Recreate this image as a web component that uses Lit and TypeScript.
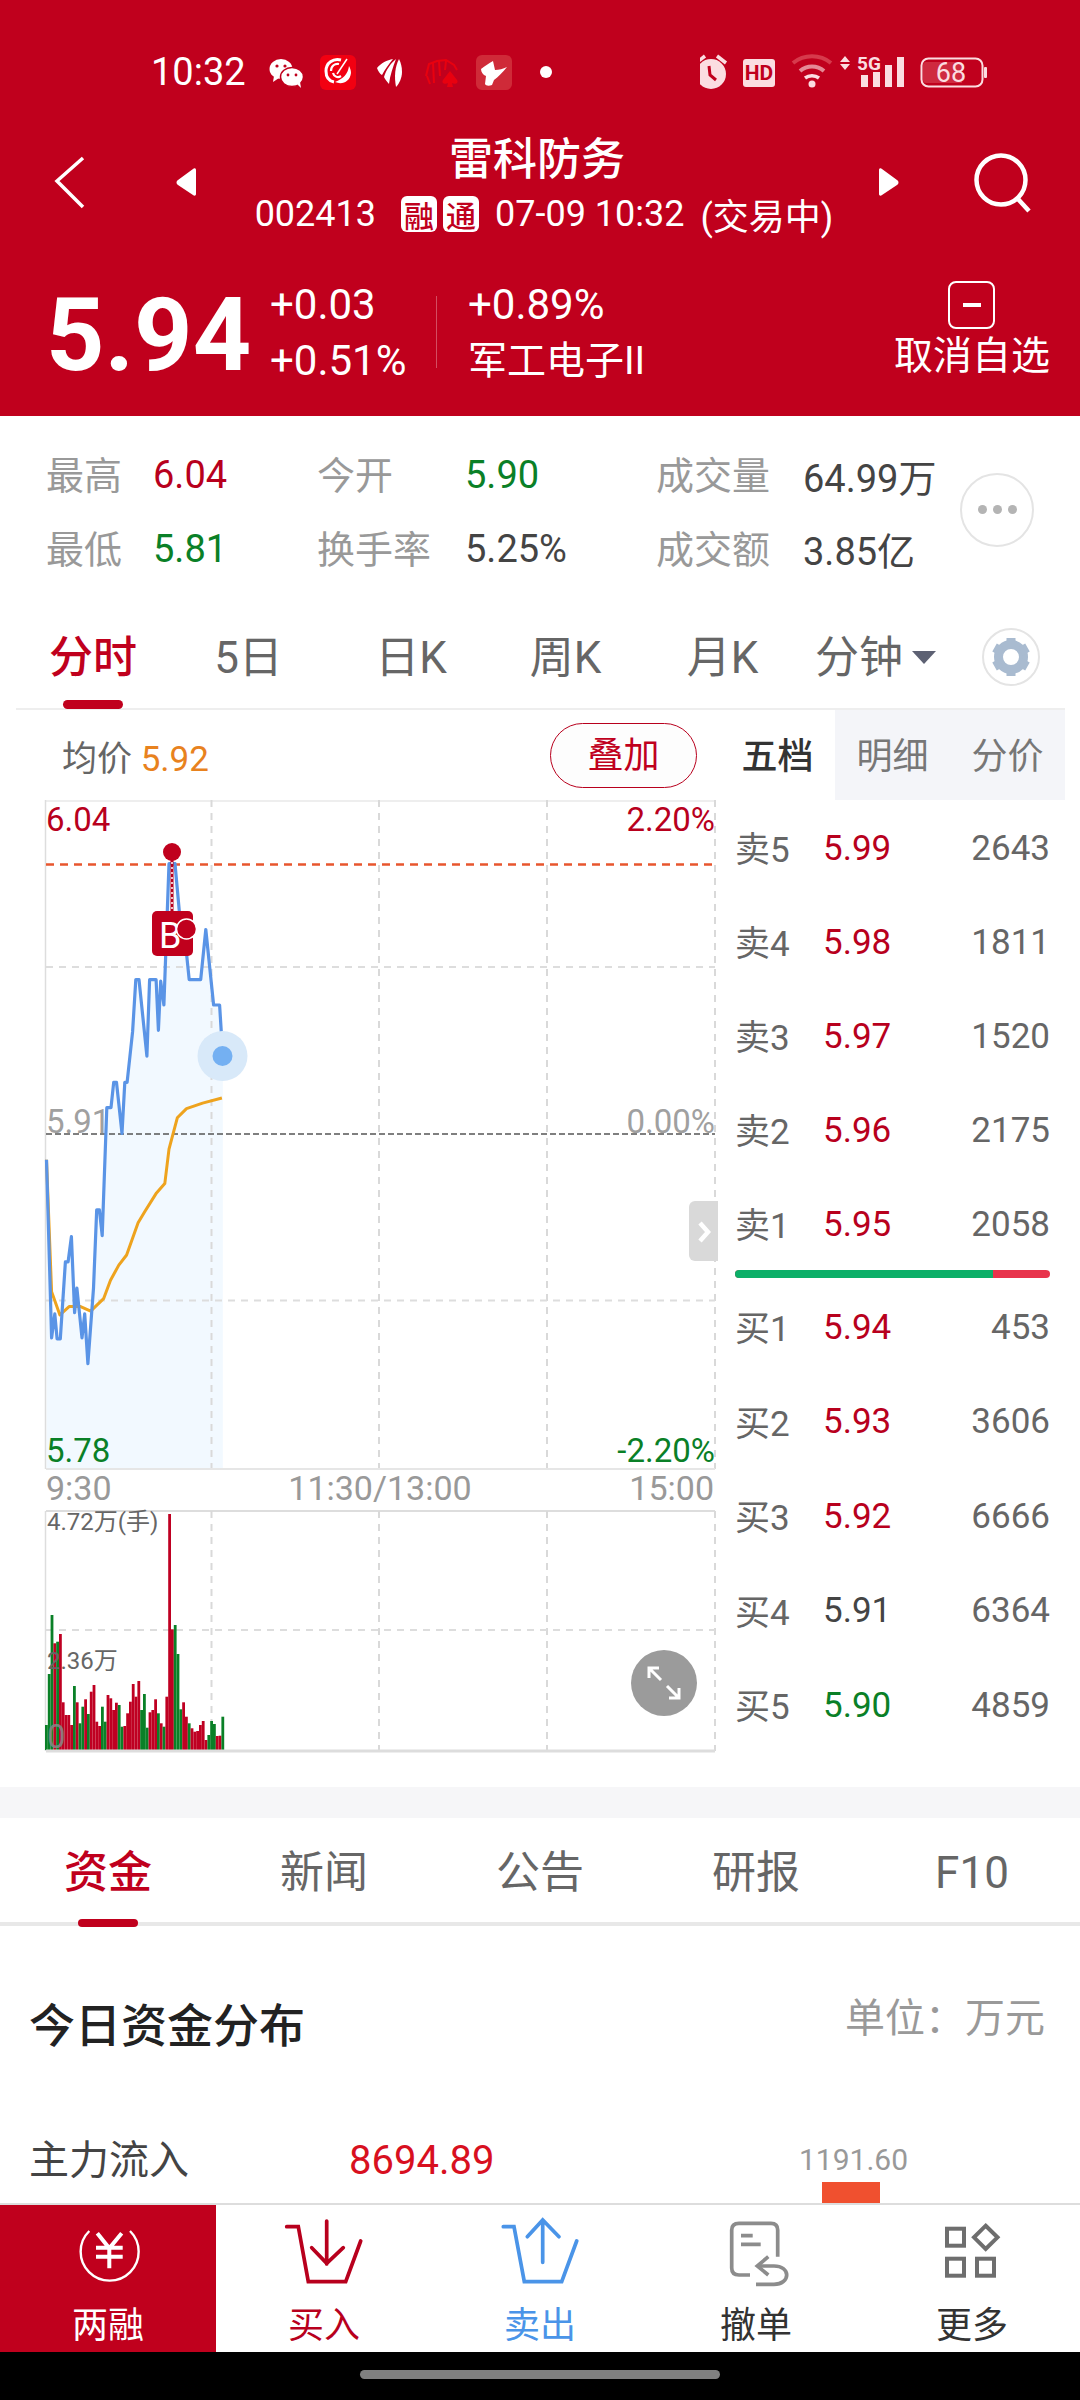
import { LitElement, css, html, svg } from "lit";
import { customElement } from "lit/decorators.js";

const RED = "#c0001d";
const GREEN = "#0a8027";

// price line traced from the reference, in zoomed crop coordinates
const PRICE: number[][] = [
  [101, 803], [112, 1190], [119, 1138], [124, 1192], [131, 1192], [142, 1025], [148, 1025], [155, 970],
  [162, 1135], [167, 1082], [178, 1190], [184, 1138], [191, 1246], [203, 1082], [210, 912], [216, 912],
  [222, 968], [232, 690], [241, 690], [247, 635], [253, 635], [265, 746], [271, 635], [276, 635],
  [288, 525], [295, 412], [302, 412], [319, 578], [325, 412], [339, 412], [344, 522], [349, 415],
  [356, 467], [367, 160], [380, 160], [390, 270], [405, 355], [411, 412], [436, 412], [447, 303],
  [464, 467], [477, 467], [484, 578],
];
const AVG: number[][] = [
  [101, 803], [112, 1090], [130, 1140], [150, 1122], [175, 1122], [197, 1132], [225, 1105], [240, 1065],
  [258, 1032], [275, 1010], [300, 940], [315, 915], [340, 875], [358, 855], [367, 780], [385, 712],
  [405, 692], [440, 680], [482, 669],
];
const toPoints = (pts: number[][]) =>
  pts.map(([x, y]) => `${(x / 2.172).toFixed(1)},${(y / 2.172 - 10).toFixed(1)}`).join(" ");

// volume bars: [colour, top in a 3x crop whose baseline is 450]
const BARS: [string, number][] = [
  ["g", 375], ["g", 222], ["g", 45], ["r", 130], ["g", 125], ["r", 102], ["r", 307], ["r", 345], ["r", 345],
  ["r", 375], ["g", 258], ["r", 307], ["g", 370], ["g", 320], ["r", 298], ["g", 342], ["r", 275], ["r", 255],
  ["r", 365], ["r", 378], ["g", 320], ["g", 365], ["r", 285], ["r", 295], ["r", 330], ["r", 308], ["g", 315],
  ["g", 380], ["r", 378], ["r", 340], ["r", 305], ["r", 252], ["r", 290], ["r", 243], ["g", 330], ["g", 282],
  ["g", 383], ["r", 337], ["r", 330], ["r", 298], ["g", 340], ["r", 370], ["g", 380], ["r", 290], ["r", -258],
  ["r", 88], ["g", 75], ["g", 162], ["g", 328], ["r", 307], ["r", 350], ["g", 370], ["r", 385], ["r", 395],
  ["r", 393], ["r", 375], ["r", 363], ["r", 420], ["g", 405], ["g", 363], ["g", 372], ["r", 408], ["r", 407],
  ["g", 350],
];

const SELLS = [
  ["卖5", "5.99", "2643", "up"],
  ["卖4", "5.98", "1811", "up"],
  ["卖3", "5.97", "1520", "up"],
  ["卖2", "5.96", "2175", "up"],
  ["卖1", "5.95", "2058", "up"],
];
const BUYS = [
  ["买1", "5.94", "453", "up"],
  ["买2", "5.93", "3606", "up"],
  ["买3", "5.92", "6666", "up"],
  ["买4", "5.91", "6364", "flat"],
  ["买5", "5.90", "4859", "down"],
];

@customElement("app-root")
export class AppRoot extends LitElement {
  static styles = css`
    :host {
      display: flex;
      flex-direction: column;
      width: 1080px;
      height: 2400px;
      overflow: hidden;
      background: #fff;
      font-family: Roboto, "Noto Sans CJK SC", sans-serif;
      color: #333;
    }

    svg {
      display: block;
      flex: none;
    }

    .head {
      height: 416px;
      flex: none;
      background: #c0001d;
      color: #fff;
    }

    .status {
      display: flex;
      align-items: center;
      height: 44px;
      padding: 50px 0 0 151px;
    }

    .clock {
      width: 109px;
      font-size: 38px;
      line-height: 44px;
    }

    .status-right {
      margin-left: 142px;
    }

    .nav {
      display: flex;
      height: 108px;
      margin-top: 36px;
    }

    .title {
      flex: 1;
      text-align: center;
    }

    .title h1 {
      margin: 0 6px 0 0;
      font-size: 44px;
      line-height: 60px;
      font-weight: 500;
    }

    .sub {
      display: flex;
      justify-content: center;
      align-items: center;
      margin-left: 8px;
      height: 48px;
      font-size: 36px;
      white-space: nowrap;
    }

    .tag {
      display: flex;
      align-items: center;
      justify-content: center;
      width: 36px;
      height: 36px;
      margin-left: 6px;
      border-radius: 6px;
      background: #fff;
      color: #c0001d;
      font-size: 30px;
      font-weight: 500;
    }

    .code {
      margin-right: 19px;
    }

    .time {
      margin-left: 16px;
    }

    .state {
      margin-left: 16px;
    }

    .quote {
      display: flex;
      align-items: flex-start;
      padding: 39px 30px 0 46px;
    }

    .price {
      width: 224px;
      margin-top: 2px;
      font-size: 102px;
      line-height: 112px;
      font-weight: 700;
    }

    .changes {
      width: 166px;
      font-size: 42px;
      line-height: 56px;
    }

    .divider {
      width: 1px;
      height: 72px;
      margin: 19px 31px 0 0;
      background: rgba(255, 255, 255, 0.3);
    }

    .sector {
      font-size: 42px;
      line-height: 56px;
    }

    .sector .cn {
      font-size: 39px;
    }

    .watch {
      display: flex;
      flex-direction: column;
      align-items: center;
      margin: 4px 0 0 auto;
      font-size: 39px;
      line-height: 54px;
    }

    .watch i {
      display: flex;
      align-items: center;
      justify-content: center;
      box-sizing: border-box;
      width: 47px;
      height: 48px;
      border: 2px solid #fff;
      border-radius: 8px;
    }

    .watch i::before {
      content: "";
      width: 18px;
      height: 4px;
      background: #fff;
    }

    .stats {
      display: flex;
      align-items: center;
      height: 198px;
      flex: none;
      box-sizing: border-box;
      padding: 0 0 6px 46px;
    }

    .stats-grid {
      display: grid;
      grid-template-columns: 107px 164px 148px 191px 147px 157px;
      grid-auto-rows: 73.500px;
      align-items: center;
      font-size: 38px;
      white-space: nowrap;
    }

    .lbl {
      margin-top: -5px;
      color: #999;
      font-size: 38px;
    }

    .up {
      color: #b8001d;
    }

    .down {
      color: #0a8027;
    }

    .flat {
      color: #444;
    }

    .more {
      display: flex;
      align-items: center;
      justify-content: center;
      gap: 6px;
      box-sizing: border-box;
      width: 74px;
      height: 74px;
      margin-top: -5px;
      border: 2px solid #e4e4e4;
      border-radius: 50%;
    }

    .more b {
      width: 9px;
      height: 9px;
      border-radius: 50%;
      background: #b4b4b4;
    }

    .tabs {
      display: flex;
      height: 96px;
      flex: none;
      box-sizing: border-box;
      margin: 0 15px 0 16px;
      border-bottom: 2px solid #eee;
      font-size: 44px;
      line-height: 88px;
      color: #666;
    }

    .tabs > div {
      position: relative;
      text-align: center;
    }

    .tabs .active {
      color: #c0001d;
      font-weight: 500;
    }

    .tabs .active::after {
      content: "";
      position: absolute;
      left: 47px;
      bottom: -1px;
      width: 60px;
      height: 9px;
      border-radius: 5px;
      background: #c0001d;
    }

    .caret {
      display: inline-block;
      margin-left: 9px;
      vertical-align: 9px;
      border-left: 12px solid transparent;
      border-right: 12px solid transparent;
      border-top: 13px solid #5d6173;
    }

    .gear {
      margin: 13px 0 0 40px;
    }

    .toolbar {
      display: flex;
      align-items: center;
      height: 90px;
      flex: none;
    }

    .avg {
      width: 488px;
      margin-left: 62px;
      font-size: 35px;
      color: #666;
    }

    .avg span {
      color: #e8821e;
    }

    .overlay {
      box-sizing: border-box;
      width: 147px;
      height: 65px;
      border: 1.5px solid #b8001d;
      border-radius: 33px;
      background: #fdfdfd;
      color: #c0001d;
      font-size: 36px;
      line-height: 64px;
      text-align: center;
    }

    .seg {
      width: 115px;
      height: 90px;
      text-align: center;
      font-size: 36px;
      line-height: 94px;
      color: #777;
    }

    .seg.first {
      margin-left: 23px;
      color: #333;
      font-weight: 500;
    }

    .seg.off {
      background: #f4f5f9;
    }

    .market {
      display: flex;
      height: 987px;
      flex: none;
    }

    .book {
      width: 315px;
      padding: 1px 0 0 5px;
      flex: none;
    }

    .row {
      display: grid;
      grid-template-columns: 88px auto 1fr;
      align-items: center;
      height: 94px;
      font-size: 35px;
      color: #666;
    }

    .row .side {
      margin-top: -3px;
    }

    .row .vol {
      text-align: right;
    }

    .row.bid {
      height: 94.500px;
    }

    .ratio {
      display: flex;
      height: 8px;
      margin: -1px 0 2px;
      border-radius: 4px;
      overflow: hidden;
      background: #e8344c;
    }

    .ratio i {
      width: 258px;
      background: #0caf68;
    }

    .gap {
      height: 31px;
      flex: none;
      background: #f6f6f8;
    }

    .news {
      display: grid;
      grid-template-columns: repeat(5, 216px);
      height: 108px;
      flex: none;
      box-sizing: border-box;
      border-bottom: 4px solid #e8e8e8;
      font-size: 44px;
      line-height: 110px;
      text-align: center;
      color: #666;
    }

    .news div {
      position: relative;
    }

    .news .active {
      color: #c0001d;
      font-weight: 500;
    }

    .news .active::after {
      content: "";
      position: absolute;
      left: 78px;
      bottom: 1px;
      width: 60px;
      height: 8px;
      border-radius: 4px;
      background: #c0001d;
    }

    .funds {
      flex: 1;
      min-height: 0;
      overflow: hidden;
      padding: 64px 35px 0 29px;
    }

    .funds-head {
      display: flex;
      justify-content: space-between;
      align-items: flex-start;
    }

    .funds-head h2 {
      margin: 0;
      font-size: 46px;
      line-height: 72px;
      font-weight: 500;
      color: #222;
    }

    .funds-head span {
      font-size: 40px;
      line-height: 58px;
      color: #999;
    }

    .flow {
      display: flex;
      margin-top: 69px;
      font-size: 40px;
      line-height: 60px;
    }

    .flow .name {
      width: 320px;
      color: #444;
    }

    .flow .val {
      width: 450px;
      color: #d8101f;
    }

    .flow .col {
      width: 104px;
      font-size: 30px;
      line-height: 44px;
      padding-top: 7px;
      color: #999;
      text-align: center;
    }

    .flow .col i {
      display: block;
      width: 58px;
      height: 40px;
      margin: 0 auto;
      background: #f0502f;
    }

    .bottom {
      display: grid;
      grid-template-columns: repeat(5, 216px);
      height: 149px;
      flex: none;
      box-sizing: border-box;
      border-top: 2px solid #ddd;
      background: #fff;
    }

    .bottom > div {
      display: flex;
      flex-direction: column;
      align-items: center;
      font-size: 36px;
      line-height: 50px;
      color: #333;
    }

    .bottom svg {
      margin-top: 5px;
    }

    .bottom span {
      margin-top: 1px;
    }

    .bottom .credit {
      background: #c0001d;
      color: #fff;
    }

    .bottom .buy {
      color: #b8001d;
    }

    .bottom .sell {
      color: #4a94e8;
    }

    .gesture {
      display: flex;
      justify-content: center;
      padding-top: 18px;
      height: 48px;
      flex: none;
      box-sizing: border-box;
      background: #000;
    }

    .gesture i {
      width: 360px;
      height: 9px;
      border-radius: 5px;
      background: #808080;
    }
  `;

  private statusLeft() {
    return html`<svg width="298" height="44" viewBox="260 50 298 44">
      <ellipse cx="281" cy="69" rx="11.500" ry="10" fill="#fff" />
      <path d="M274 76l-1 6 6-4z" fill="#fff" />
      <ellipse cx="292" cy="77" rx="11.500" ry="9.500" fill="#fff" stroke="${RED}" stroke-width="1.5" />
      <path d="M297 84l4 4-1-6z" fill="#fff" />
      <circle cx="277" cy="66" r="1.6" fill="${RED}" /><circle cx="285" cy="66" r="1.6" fill="${RED}" />
      <circle cx="288" cy="75" r="1.4" fill="${RED}" /><circle cx="296" cy="75" r="1.4" fill="${RED}" />

      <rect x="320" y="55" width="36" height="35" rx="6" fill="#f20011" />
      <path d="M341 60c-8-2-15 3-15 11 0 6 3 10 8 11" fill="none" stroke="#fff" stroke-width="3" />
      <path d="M331 71c0-5 4-8 8-7M333 73c1 4 5 5 8 3" fill="none" stroke="#fff" stroke-width="2.2" />
      <path d="M335 82c7 3 15 0 16-9 0-3-1-5-2-7-1 8-6 13-14 16z" fill="#fff" />
      <path d="M347 59l-10 15" stroke="#fff" stroke-width="1.5" />

      <path d="M393 59c-6 1-12 4-16 9 1 3 3 6 5 7 3-6 7-11 11-16z" fill="#fff" />
      <path d="M396 59c-5 4-10 11-12 18 1 2 3 5 5 7 1-9 4-17 7-25z" fill="#fff" />
      <path d="M399 59c-4 8-5 17-3 28 3-3 6-9 6-15 0-5-1-9-3-13z" fill="#fff" />

      <g fill="none" stroke="#e8000f" stroke-width="2">
        <path d="M426 76l3-12 8-3 9-1 8 5 3 5" />
        <path d="M430 84l-3-8M434 83l-1-20M440 76l-1-15M445 70l1-9" />
      </g>
      <path d="M450 71l-7 9c-2 3 2 5 5 3l-1 4h6l-1-4c3 2 7 0 5-3z" fill="#e8000f" />

      <rect x="476" y="55" width="36" height="35" rx="6" fill="#cf2a38" />
      <path d="M481 69c4-3 8-6 12-8l2 9c4 0 8-1 12-3-4 5-9 10-13 13l-2 5c-3 1-6 1-7-1l1-8c-3-1-5-4-5-7z" fill="#fff" />
      <circle cx="546" cy="72" r="6" fill="#fff" />
    </svg>`;
  }

  private statusRight() {
    const pale = "#fbdde1";
    return html`<svg width="290" height="44" viewBox="700 50 290 44">
      <circle cx="711" cy="74" r="15" fill="${pale}" />
      <path d="M696 63l9-7M726 63l-9-7" stroke="${pale}" stroke-width="3.5" />
      <path d="M709 66l1 9 6 5" fill="none" stroke="${RED}" stroke-width="3" />

      <rect x="743" y="59" width="32" height="28" rx="3" fill="${pale}" />
      <text x="759" y="80" text-anchor="middle" font-size="21" font-weight="700" fill="${RED}" font-family="Roboto">HD</text>

      <path d="M793 63c11-9 27-9 38 0" fill="none" stroke="#d63a4c" stroke-width="4" />
      <path d="M800 71c7-6 17-6 24 0" fill="none" stroke="#e58a96" stroke-width="4" />
      <path d="M805 78c4-3 10-3 14 0" fill="none" stroke="${pale}" stroke-width="3.5" />
      <circle cx="812" cy="84" r="3.5" fill="${pale}" />

      <path d="M845 56l5 6h-10zM845 70l5-6h-10z" fill="${pale}" />
      <text x="869" y="70" text-anchor="middle" font-size="19" font-weight="700" fill="${pale}" font-family="Roboto">5G</text>
      <rect x="861" y="75" width="7" height="12" fill="${pale}" />
      <rect x="873" y="72" width="7" height="15" fill="${pale}" />
      <rect x="885" y="65" width="7" height="22" fill="${pale}" />
      <rect x="897" y="57" width="7" height="30" fill="${pale}" />

      <rect x="921.5" y="58.5" width="61" height="28" rx="7" fill="none" stroke="${pale}" stroke-width="2" />
      <path d="M926 62h36v21h-36a3 3 0 0 1-3-3v-15a3 3 0 0 1 3-3z" fill="#cf2a3f" />
      <rect x="984" y="67" width="3" height="11" rx="1" fill="${pale}" />
      <text x="951" y="82" text-anchor="middle" font-size="27" fill="${pale}" font-family="Roboto">68</text>
    </svg>`;
  }

  private chart() {
    const verticals = [211.5, 379, 547, 715];
    const top = toPoints(PRICE);
    const lastX = (484 / 2.172).toFixed(1);
    const firstX = (101 / 2.172).toFixed(1);
    return html`<svg width="730" height="987" viewBox="0 800 730 987" font-family="Roboto, 'Noto Sans CJK SC', sans-serif">
      <g transform="translate(0 800)">
        <polygon points="${firstX},669 ${top} ${lastX},669" fill="#f2f9ff" />
      </g>

      <line x1="46" y1="801" x2="715" y2="801" stroke="#eee" stroke-width="2" />
      <line x1="45.500" y1="800" x2="45.500" y2="1469" stroke="#ddd" stroke-width="1.5" />
      ${verticals.map(
        (x) => svg`<line x1=${x} y1="800" x2=${x} y2="1469" stroke="#d9d9d9" stroke-width="2" stroke-dasharray="7 6" />`
      )}
      ${[967, 1300.5].map(
        (y) => svg`<line x1="46" y1=${y} x2="715" y2=${y} stroke="#ddd" stroke-width="2" stroke-dasharray="7 6" />`
      )}
      <line x1="46" y1="1469" x2="715" y2="1469" stroke="#e6e6e6" stroke-width="2" />
      <line x1="46" y1="864.5" x2="715" y2="864.5" stroke="#e8562e" stroke-width="2.5" stroke-dasharray="8 6" />
      <line x1="46" y1="1134" x2="715" y2="1134" stroke="#555" stroke-width="1.5" stroke-dasharray="6 3" />

      <g font-size="33">
        <text x="46" y="831" fill="#b8001d">6.04</text>
        <text x="715" y="831" fill="#b8001d" text-anchor="end">2.20%</text>
        <text x="46" y="1133" fill="#a0a0a0">5.91</text>
        <text x="715" y="1133" fill="#a0a0a0" text-anchor="end">0.00%</text>
        <text x="46" y="1462" fill="${GREEN}">5.78</text>
        <text x="715" y="1462" fill="${GREEN}" text-anchor="end">-2.20%</text>
      </g>
      <g font-size="34" fill="#999">
        <text x="46" y="1500">9:30</text>
        <text x="380" y="1500" text-anchor="middle">11:30/13:00</text>
        <text x="714" y="1500" text-anchor="end">15:00</text>
      </g>

      <g transform="translate(0 800)" fill="none" stroke-linejoin="round">
        <polyline points="${toPoints(AVG)}" stroke="#eea31e" stroke-width="3" />
        <polyline points="${top}" stroke="#5a94e6" stroke-width="3.2" />
      </g>

      <circle cx="222.500" cy="1056" r="25" fill="#d8e9f9" />
      <circle cx="222.500" cy="1056" r="10" fill="#74b0f2" />

      <line x1="172" y1="852" x2="172" y2="912" stroke="#b8001d" stroke-width="3" />
      <line x1="172" y1="852" x2="172" y2="912" stroke="#fff" stroke-width="1.5" stroke-dasharray="2 3" />
      <circle cx="172" cy="852" r="9" fill="#c0001d" />
      <rect x="152" y="911" width="41" height="45" rx="5" fill="#c0001d" />
      <text x="159" y="948" font-size="36" fill="#fff">B</text>
      <circle cx="186.5" cy="929" r="10" fill="#c0001d" stroke="#fff" stroke-width="1.5" />

      <path d="M718 1201h-23a6 6 0 0 0-6 6v48a6 6 0 0 0 6 6h23z" fill="#d9d9d9" />
      <path d="M700 1223l8 9-8 9" fill="none" stroke="#fff" stroke-width="4.5" />

      <!-- volume pane -->
      <line x1="46" y1="1511" x2="715" y2="1511" stroke="#ddd" stroke-width="2" />
      <line x1="45.500" y1="1511" x2="45.500" y2="1751" stroke="#ddd" stroke-width="1.5" />
      ${verticals.map(
        (x) => svg`<line x1=${x} y1="1511" x2=${x} y2="1751" stroke="#d9d9d9" stroke-width="2" stroke-dasharray="7 6" />`
      )}
      <line x1="46" y1="1630" x2="715" y2="1630" stroke="#ddd" stroke-width="2" stroke-dasharray="7 6" />
      ${BARS.map(
        ([c, t], i) =>
          svg`<rect x=${(45 + i * 2.8).toFixed(2)} y=${(1600 + t / 3).toFixed(1)} width="2.8" height=${((450 - t) / 3).toFixed(1)} fill=${c === "g" ? GREEN : "#bf0022"} />`
      )}
      <line x1="46" y1="1751" x2="715" y2="1751" stroke="#ddd" stroke-width="3" />
      <g font-size="24" fill="#666">
        <text x="47" y="1530">4.72万(手)</text>
        <text x="47" y="1669">2.36万</text>
      </g>
      <text x="47" y="1748" font-size="33" fill="#888" opacity="0.85">0</text>

      <circle cx="664" cy="1683" r="33" fill="#9b9b9b" />
      <path
        d="M649 1668l12 12M649 1678v-10h10M667 1686l12 12M679 1688v10h-10"
        fill="none"
        stroke="#fff"
        stroke-width="3"
      />
    </svg>`;
  }

  private gear() {
    const teeth = [0, 60, 120, 180, 240, 300];
    return html`<svg class="gear" width="58" height="60" viewBox="0 0 58 60">
      <circle cx="29" cy="30" r="28" fill="#fff" stroke="#e4e4e4" stroke-width="2" />
      <circle cx="29" cy="30" r="12.5" fill="none" stroke="#a9bbd0" stroke-width="9" />
      ${teeth.map(
        (a) => svg`<rect x="24.5" y="11" width="9" height="8" fill="#a9bbd0" transform="rotate(${a} 29 30)" />`
      )}
    </svg>`;
  }

  private row(r: string[], bid = false) {
    return html`<div class="row ${bid ? "bid" : ""}">
      <span class="side">${r[0]}</span><span class=${r[3]}>${r[1]}</span><span class="vol">${r[2]}</span>
    </div>`;
  }

  render() {
    return html`
      <header class="head">
        <div class="status">
          <span class="clock">10:32</span>
          ${this.statusLeft()}
          <div class="status-right">${this.statusRight()}</div>
        </div>
        <div class="nav">
          <svg width="220" height="108" viewBox="0 130 220 108">
            <path d="M83 158l-26 23 26 26" fill="none" stroke="#fff" stroke-width="3.5" />
            <path d="M196 170v24c0 2-2 2-3 1l-15-10c-2-1-2-4 0-5l15-11c1-1 3-1 3 1z" fill="#fff" />
          </svg>
          <div class="title">
            <h1>雷科防务</h1>
            <div class="sub">
              <span class="code">002413</span>
              <span class="tag">融</span><span class="tag">通</span>
              <span class="time">07-09 10:32</span>
              <span class="state">(交易中)</span>
            </div>
          </div>
          <svg width="220" height="108" viewBox="860 130 220 108">
            <path d="M879 170v24c0 2 2 2 3 1l15-10c2-1 2-4 0-5l-15-11c-1-1-3-1-3 1z" fill="#fff" />
            <circle cx="1001" cy="180" r="24.5" fill="none" stroke="#fff" stroke-width="4.5" />
            <path d="M1018 199l11 12" stroke="#fff" stroke-width="4.5" />
          </svg>
        </div>
        <div class="quote">
          <div class="price">5.94</div>
          <div class="changes"><div>+0.03</div><div>+0.51%</div></div>
          <div class="divider"></div>
          <div class="sector"><div>+0.89%</div><div class="cn">军工电子II</div></div>
          <div class="watch"><i></i><span>取消自选</span></div>
        </div>
      </header>

      <section class="stats">
        <div class="stats-grid">
          <span class="lbl">最高</span><span class="up">6.04</span>
          <span class="lbl">今开</span><span class="down">5.90</span>
          <span class="lbl">成交量</span><span class="flat">64.99万</span>
          <span class="lbl">最低</span><span class="down">5.81</span>
          <span class="lbl">换手率</span><span class="flat">5.25%</span>
          <span class="lbl">成交额</span><span class="flat">3.85亿</span>
        </div>
        <div class="more"><b></b><b></b><b></b></div>
      </section>

      <nav class="tabs">
        <div class="active" style="width:154px">分时</div>
        <div style="width:157px">5日</div>
        <div style="width:168px">日K</div>
        <div style="width:141px">周K</div>
        <div style="width:173px">月K</div>
        <div style="width:133px">分钟<i class="caret"></i></div>
        ${this.gear()}
      </nav>

      <div class="toolbar">
        <div class="avg">均价 <span>5.92</span></div>
        <div class="overlay">叠加</div>
        <div class="seg first">五档</div>
        <div class="seg off">明细</div>
        <div class="seg off">分价</div>
      </div>

      <div class="market">
        ${this.chart()}
        <div class="book">
          ${SELLS.map((r) => this.row(r))}
          <div class="ratio"><i></i></div>
          ${BUYS.map((r) => this.row(r, true))}
        </div>
      </div>

      <div class="gap"></div>

      <nav class="news">
        <div class="active">资金</div>
        <div>新闻</div>
        <div>公告</div>
        <div>研报</div>
        <div>F10</div>
      </nav>

      <section class="funds">
        <div class="funds-head">
          <h2>今日资金分布</h2>
          <span>单位：万元</span>
        </div>
        <div class="flow">
          <span class="name">主力流入</span>
          <span class="val">8694.89</span>
          <div class="col">1191.60<i></i></div>
        </div>
      </section>

      <footer class="bottom">
        <div class="credit">
          <svg width="100" height="90" viewBox="0 0 100 90" fill="none" stroke="#fff">
            <path d="M31.3 21A29 29 0 1 0 72 21" stroke-width="2.4" />
            <path d="M39.3 23.3l12 15 12.4-15M51.3 38.3v20M38 37.7h26.7M38 46.7h26.7" stroke-width="4" />
          </svg>
          <span>两融</span>
        </div>
        <div class="buy">
          <svg width="100" height="90" viewBox="0 0 100 90" fill="none" stroke="#b8001d" stroke-width="3.7" stroke-linecap="round">
            <path d="M12.7 16.7h11.6l10 55h37.4l15-40.7" />
            <path d="M52.7 11v43M37.7 37.7l15 15.6 16.6-15.6" />
          </svg>
          <span>买入</span>
        </div>
        <div class="sell">
          <svg width="100" height="90" viewBox="0 0 100 90" fill="none" stroke="#4a94e8" stroke-width="3.7" stroke-linecap="round">
            <path d="M13.3 16.7h10.7l10.3 55h37.4l15-40.7" />
            <path d="M52.7 52.3V10M37.3 26.7l15.4-16.7 16.3 16.7" />
          </svg>
          <span>卖出</span>
        </div>
        <div>
          <svg width="100" height="90" viewBox="0 0 100 90" fill="none" stroke="#8c8c8c" stroke-width="3.7">
            <path d="M44 65H33q-7.300 0-7.300-7V20q0-6.700 7.300-6.700h32q6.700 0 6.700 6.700v26.700" />
            <path d="M35 25.700h11.700M35 34.300h19.700" />
            <path d="M62.300 46.700L51.300 56l11 9" />
            <path d="M52 56h16c8 0 12.700 4 12.700 9s-4.700 9.300-12.700 9.300H50" />
          </svg>
          <span>撤单</span>
        </div>
        <div>
          <svg width="100" height="90" viewBox="0 0 100 90" fill="none" stroke="#6e6e6e" stroke-width="4">
            <rect x="25" y="18.700" width="17" height="17" />
            <rect x="25" y="48.700" width="17" height="17" />
            <rect x="55" y="48.700" width="17" height="17" />
            <path d="M63.700 15.700l11.800 11.600-11.800 11.700-11.700-11.700z" />
          </svg>
          <span>更多</span>
        </div>
      </footer>
      <div class="gesture"><i></i></div>
    `;
  }
}
